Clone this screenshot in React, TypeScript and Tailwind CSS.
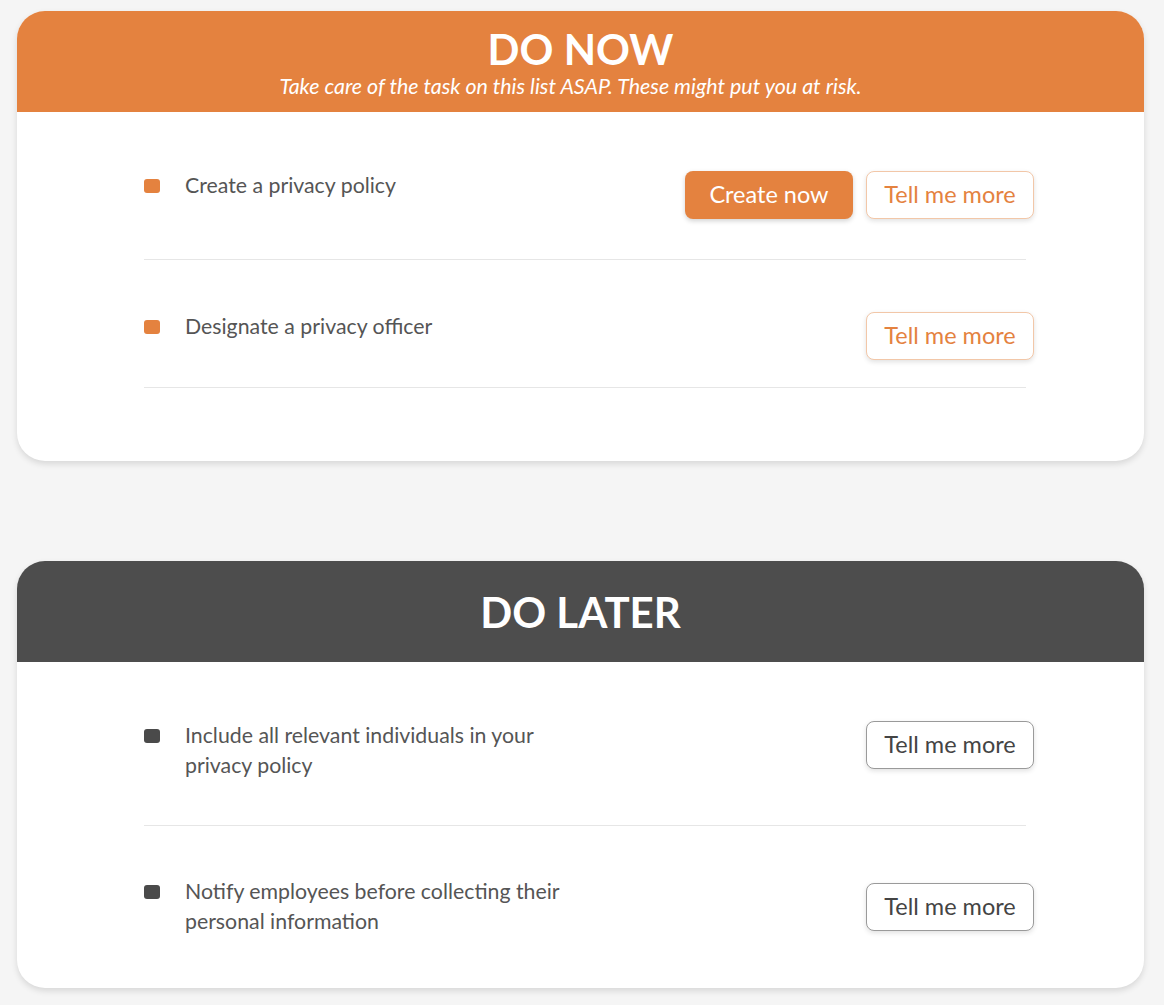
import React from "react";

type Variant = "orange" | "dark";

function Row({
  text,
  variant,
  create,
  rowClass,
  btnClass,
  divider,
}: {
  text: string;
  variant: Variant;
  create?: boolean;
  rowClass: string;
  btnClass: string;
  divider: boolean;
}) {
  const bullet = variant === "orange" ? "bg-[#e4823f]" : "bg-[#4a4a4a]";
  const more =
    variant === "orange"
      ? "border-[#f2c7a8] text-[#e4823f]"
      : "border-[#9a9a9a] text-[#444444]";
  return (
    <div>
      <div className={`flex items-start justify-between ${rowClass}`}>
        <div className="flex items-start">
          <span className={`mt-[9px] block h-[14px] w-[16px] rounded-[3px] ${bullet}`} />
          <p className="ml-[25px] max-w-[400px] text-[21.3px] leading-[30px] text-[#555555]">{text}</p>
        </div>
        <div className={`flex gap-[13px] ${btnClass}`}>
          {create && (
            <button className="h-[48px] w-[168px] rounded-[8px] bg-[#e4823f] text-[23.5px] text-white shadow-[0_2px_5px_rgba(0,0,0,0.18)]">
              Create now
            </button>
          )}
          <button
            className={`h-[48px] w-[168px] rounded-[8px] border bg-white text-[23.5px] shadow-[0_2px_5px_rgba(0,0,0,0.12)] ${more}`}
          >
            Tell me more
          </button>
        </div>
      </div>
      {divider && <div className="mr-[8px] h-px bg-[#e6e6e6]" />}
    </div>
  );
}

export default function App() {
  return (
    <div
      className="min-h-screen bg-[#f5f5f5] pl-[17px] pr-[20px] pt-[11px] pb-[17px]"
      style={{ fontFamily: "Lato, 'Open Sans', sans-serif" }}
    >
      <section className="overflow-hidden rounded-[28px] bg-white shadow-[0_3px_6px_rgba(0,0,0,0.12)]">
        <header className="flex h-[101px] flex-col items-center justify-center bg-[#e4823f] text-white">
          <h1 className="text-[42px] font-bold leading-[48px]">DO NOW</h1>
          <p className="pr-[20px] text-[21.4px] italic leading-[26px]">
            Take care of the task on this list ASAP. These might put you at risk.
          </p>
        </header>
        <div className="pt-[58px] pb-[73px] pl-[127px] pr-[110px]">
          <Row
            text="Create a privacy policy"
            variant="orange"
            create
            rowClass="pb-[40px]"
            btnClass="mt-px"
            divider
          />
          <Row
            text="Designate a privacy officer"
            variant="orange"
            rowClass="pt-[51px] pb-[27px]"
            btnClass="mt-px"
            divider
          />
        </div>
      </section>

      <section className="mt-[100px] overflow-hidden rounded-[28px] bg-white shadow-[0_3px_6px_rgba(0,0,0,0.12)]">
        <header className="flex h-[101px] flex-col items-center justify-center bg-[#4d4d4d] text-white">
          <h1 className="text-[42px] font-bold leading-[48px]">DO LATER</h1>
        </header>
        <div className="pt-[58px] pb-[52px] pl-[127px] pr-[110px]">
          <Row
            text="Include all relevant individuals in your privacy policy"
            variant="dark"
            rowClass="pb-[45px]"
            btnClass="mt-px"
            divider
          />
          <Row
            text="Notify employees before collecting their personal information"
            variant="dark"
            rowClass="pt-[50px]"
            btnClass="mt-[7px]"
            divider={false}
          />
        </div>
      </section>
    </div>
  );
}
